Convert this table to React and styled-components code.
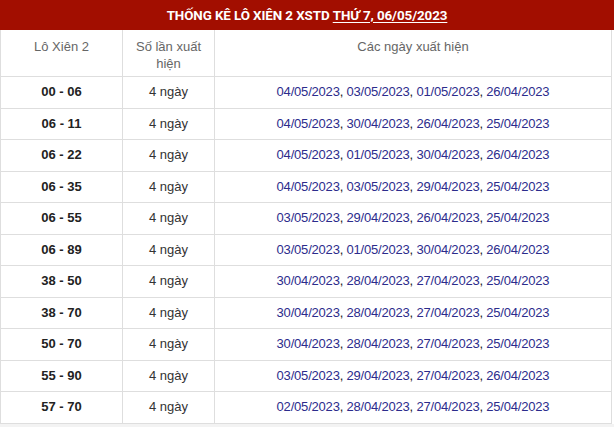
import React from "react";
import styled, { createGlobalStyle } from "styled-components";

const rows = [
  ["00 - 06", ["04/05/2023", "03/05/2023", "01/05/2023", "26/04/2023"]],
  ["06 - 11", ["04/05/2023", "30/04/2023", "26/04/2023", "25/04/2023"]],
  ["06 - 22", ["04/05/2023", "01/05/2023", "30/04/2023", "26/04/2023"]],
  ["06 - 35", ["04/05/2023", "03/05/2023", "29/04/2023", "25/04/2023"]],
  ["06 - 55", ["03/05/2023", "29/04/2023", "26/04/2023", "25/04/2023"]],
  ["06 - 89", ["03/05/2023", "01/05/2023", "30/04/2023", "26/04/2023"]],
  ["38 - 50", ["30/04/2023", "28/04/2023", "27/04/2023", "25/04/2023"]],
  ["38 - 70", ["30/04/2023", "28/04/2023", "27/04/2023", "25/04/2023"]],
  ["50 - 70", ["30/04/2023", "28/04/2023", "27/04/2023", "25/04/2023"]],
  ["55 - 90", ["03/05/2023", "29/04/2023", "27/04/2023", "26/04/2023"]],
  ["57 - 70", ["02/05/2023", "28/04/2023", "27/04/2023", "25/04/2023"]]
];

function App() {
  return (
    <>
      <GlobalStyle />
      <Box>
        <TitleBar>
          THỐNG KÊ LÔ XIÊN 2 XSTD <DateLink>THỨ 7, 06/05/2023</DateLink>
        </TitleBar>
        <Table>
          <colgroup>
            <col style={{ width: 122 }} />
            <col style={{ width: 92 }} />
            <col />
          </colgroup>
          <thead>
            <tr>
              <Th>Lô Xiên 2</Th>
              <Th>
                Số lần xuất
                <br />
                hiện
              </Th>
              <Th>Các ngày xuất hiện</Th>
            </tr>
          </thead>
          <tbody>
            {rows.map(([pair, dates]) => (
              <tr key={pair}>
                <Pair>{pair}</Pair>
                <Count>4 ngày</Count>
                <Dates>
                  {dates.map((d, i) => (
                    <React.Fragment key={i}>
                      <DateText>{d}</DateText>
                      {i < dates.length - 1 && ", "}
                    </React.Fragment>
                  ))}
                </Dates>
              </tr>
            ))}
          </tbody>
        </Table>
      </Box>
    </>
  );
}

const GlobalStyle = createGlobalStyle`
  html, body {
    margin: 0;
    padding: 0;
    background: #f3f3f3;
  }
`;

const Box = styled.div`
  width: 614px;
  background: #fff;
  font-family: "Liberation Sans", Arial, sans-serif;
`;

const TitleBar = styled.div`
  height: 30px;
  background: #a20e00;
  color: #fff;
  display: flex;
  align-items: center;
  justify-content: center;
  font-family: Roboto, "Liberation Sans", sans-serif;
  font-weight: 700;
  font-size: 13.4px;
  letter-spacing: -0.1px;
  white-space: pre;
`;

const DateLink = styled.span`
  text-decoration: underline;
  text-underline-offset: 2px;
`;

const Table = styled.table`
  width: 612px;
  border-collapse: collapse;
  table-layout: fixed;
  font-size: 13px;

  td,
  th {
    border: 1px solid #dedede;
    text-align: center;
  }
  thead th {
    border-top: none;
  }
`;

const Th = styled.th`
  font-weight: 400;
  color: #666;
  vertical-align: top;
  padding: 8px 4px 4px;
  line-height: 17px;
`;

const Cell = styled.td`
  padding: 8px 4px;
  line-height: 14.5px;
  white-space: nowrap;
`;

const Pair = styled(Cell)`
  font-weight: 700;
  color: #222;
`;

const Count = styled(Cell)`
  color: #333;
`;

const Dates = styled(Cell)`
  color: #222;
  letter-spacing: -0.2px;
`;

const DateText = styled.span`
  color: #2c2c8c;
`;

export default App;
